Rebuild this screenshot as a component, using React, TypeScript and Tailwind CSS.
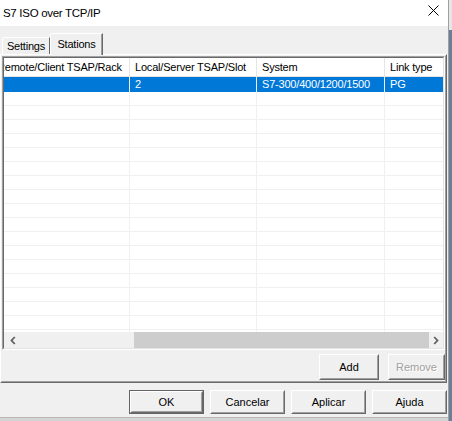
import React from "react";

function Btn({
  label,
  className = "",
  isDefault = false,
  disabled = false,
}: {
  label: string;
  className?: string;
  isDefault?: boolean;
  disabled?: boolean;
}) {
  return (
    <div className={`flex shrink-0 ${isDefault ? "border border-[#646464]" : ""} ${className}`}>
      <div className="flex-1 flex border border-t-white border-l-white border-r-[#696969] border-b-[#696969]">
        <div className="flex-1 flex items-center justify-center border border-t-[#f0f0f0] border-l-[#f0f0f0] border-r-[#a0a0a0] border-b-[#a0a0a0] bg-[#f0f0f0]">
          <span
            className={
              disabled
                ? "text-[#a0a0a0] [text-shadow:1px_1px_0_#ffffff]"
                : "text-black"
            }
          >
            {label}
          </span>
        </div>
      </div>
    </div>
  );
}

const cols = [
  { w: "w-[138px]", head: "Remote/Client TSAP/Rack", val: "" },
  { w: "w-[127px]", head: "Local/Server TSAP/Slot", val: "2" },
  { w: "w-[128px]", head: "System", val: "S7-300/400/1200/1500" },
  { w: "w-[120px]", head: "Link type", val: "PG" },
];

export default function App() {
  const emptyRows = Array.from({ length: 18 });
  return (
    <div className="w-[452px] h-[421px] flex bg-[#f0f0f0] font-['Liberation_Sans',Arial,sans-serif] text-[11px] text-black overflow-hidden">
      <div className="w-[448px] shrink-0 flex flex-col">
        {/* Title bar */}
        <div className="h-[26px] shrink-0 bg-white flex items-center justify-between pl-[3px] pr-[9px]">
          <span className="text-[11.5px] tracking-[-0.3px] mt-[2px] whitespace-nowrap">
            S7 ISO over TCP/IP
          </span>
          <svg width="11" height="11" viewBox="0 0 11 11" className="mb-[5px]">
            <path d="M0.5 0.5 L10.5 10.5 M10.5 0.5 L0.5 10.5" stroke="#000" strokeWidth="1" />
          </svg>
        </div>

        {/* Tabs */}
        <div className="h-[28px] shrink-0 flex items-end pl-[2px]">
          <div className="w-[48px] h-[17px] flex items-center justify-center border-t border-l border-r border-t-white border-l-white border-r-[#696969] rounded-tl-[2px]">
            <span className="tracking-[-0.2px]">Settings</span>
          </div>
          <div className="relative z-10 -mb-[1px] w-[53px] h-[22px] flex items-center justify-center bg-[#f0f0f0] border-t border-l border-r border-t-white border-l-white border-r-[#696969] rounded-tl-[2px] shadow-[inset_-1px_0_0_#a0a0a0]">
            <span className="tracking-[-0.2px] mb-[1px]">Stations</span>
          </div>
        </div>

        {/* Tab panel */}
        <div className="w-[447px] h-[329px] shrink-0 flex border border-t-white border-l-white border-r-[#696969] border-b-[#696969]">
          <div className="w-[445px] min-w-0 flex flex-col overflow-hidden border border-t-[#f0f0f0] border-l-[#f0f0f0] border-r-[#a0a0a0] border-b-[#a0a0a0]">
            {/* List view */}
            <div className="w-[443px] h-[294px] shrink-0 flex border border-t-[#a0a0a0] border-l-[#a0a0a0] border-r-white border-b-white">
              <div className="w-[441px] min-w-0 flex flex-col border border-t-[#696969] border-l-[#696969] border-r-[#e3e3e3] border-b-[#e3e3e3] bg-white overflow-hidden">
                {/* header */}
                <div className="h-[19px] shrink-0 overflow-hidden border-b border-b-[#e5e5e5]">
                  <div className="flex h-full -ml-[12px] w-[600px] tracking-[-0.2px]">
                    {cols.map((c) => (
                      <div
                        key={c.head}
                        className={`${c.w} shrink-0 h-full flex items-center pl-[5px] border-r border-r-[#e5e5e5] whitespace-nowrap`}
                      >
                        {c.head}
                      </div>
                    ))}
                  </div>
                </div>
                {/* rows */}
                <div className="h-[255px] shrink-0 overflow-hidden">
                  <div className="flex h-[15px] -ml-[12px] w-[600px] tracking-[-0.2px]">
                    {cols.map((c) => (
                      <div
                        key={c.head}
                        className={`${c.w} shrink-0 h-full flex items-center pl-[5px] bg-[#0078d7] text-white border-r border-r-[#f0f0f0] whitespace-nowrap`}
                      >
                        {c.val}
                      </div>
                    ))}
                  </div>
                  {emptyRows.map((_, i) => (
                    <div key={i} className="flex h-[14px] -ml-[12px] w-[600px]">
                      {cols.map((c) => (
                        <div
                          key={c.head}
                          className={`${c.w} shrink-0 h-full border-r border-b border-r-[#f0f0f0] border-b-[#f0f0f0]`}
                        />
                      ))}
                    </div>
                  ))}
                </div>
                {/* horizontal scrollbar */}
                <div className="h-[16px] shrink-0 flex bg-[#f0f0f0]">
                  <div className="w-[17px] flex items-center justify-center">
                    <svg width="6" height="9" viewBox="0 0 6 9">
                      <path d="M4.8 1 L1.5 4.5 L4.8 8" stroke="#606060" strokeWidth="1.8" fill="none" />
                    </svg>
                  </div>
                  <div className="flex-1 flex">
                    <div className="ml-[113px] flex-1 bg-[#cdcdcd]" />
                  </div>
                  <div className="w-[14px] flex items-center justify-center">
                    <svg width="6" height="9" viewBox="0 0 6 9">
                      <path d="M1.2 1 L4.5 4.5 L1.2 8" stroke="#606060" strokeWidth="1.8" fill="none" />
                    </svg>
                  </div>
                </div>
              </div>
            </div>

            {/* Add / Remove */}
            <div className="mt-[4px] h-[26px] shrink-0 flex justify-end gap-[9px]">
              <Btn label="Add" className="w-[60px]" />
              <Btn label="Remove" className="w-[57px]" disabled />
            </div>
          </div>
        </div>

        {/* Dialog buttons */}
        <div className="pt-[7px] h-[34px] shrink-0 flex">
          <div className="ml-[129px] flex gap-[6px] h-[24px]">
            <Btn label="OK" className="w-[75px]" isDefault />
            <Btn label="Cancelar" className="w-[75px]" />
            <Btn label="Aplicar" className="w-[75px]" />
            <Btn label="Ajuda" className="w-[75px]" />
          </div>
        </div>
        <div className="flex-1 bg-[#d4d4d4] border-t border-t-[#b9b9b9]" />
      </div>
      <div className="w-[1px] shrink-0 bg-[#a0a0a0]" />
      <div className="flex-1 flex flex-col">
        <div className="h-[30px] bg-[#e6e6e6]" />
        <div className="flex-1 bg-[#6f7c99]" />
      </div>
    </div>
  );
}
